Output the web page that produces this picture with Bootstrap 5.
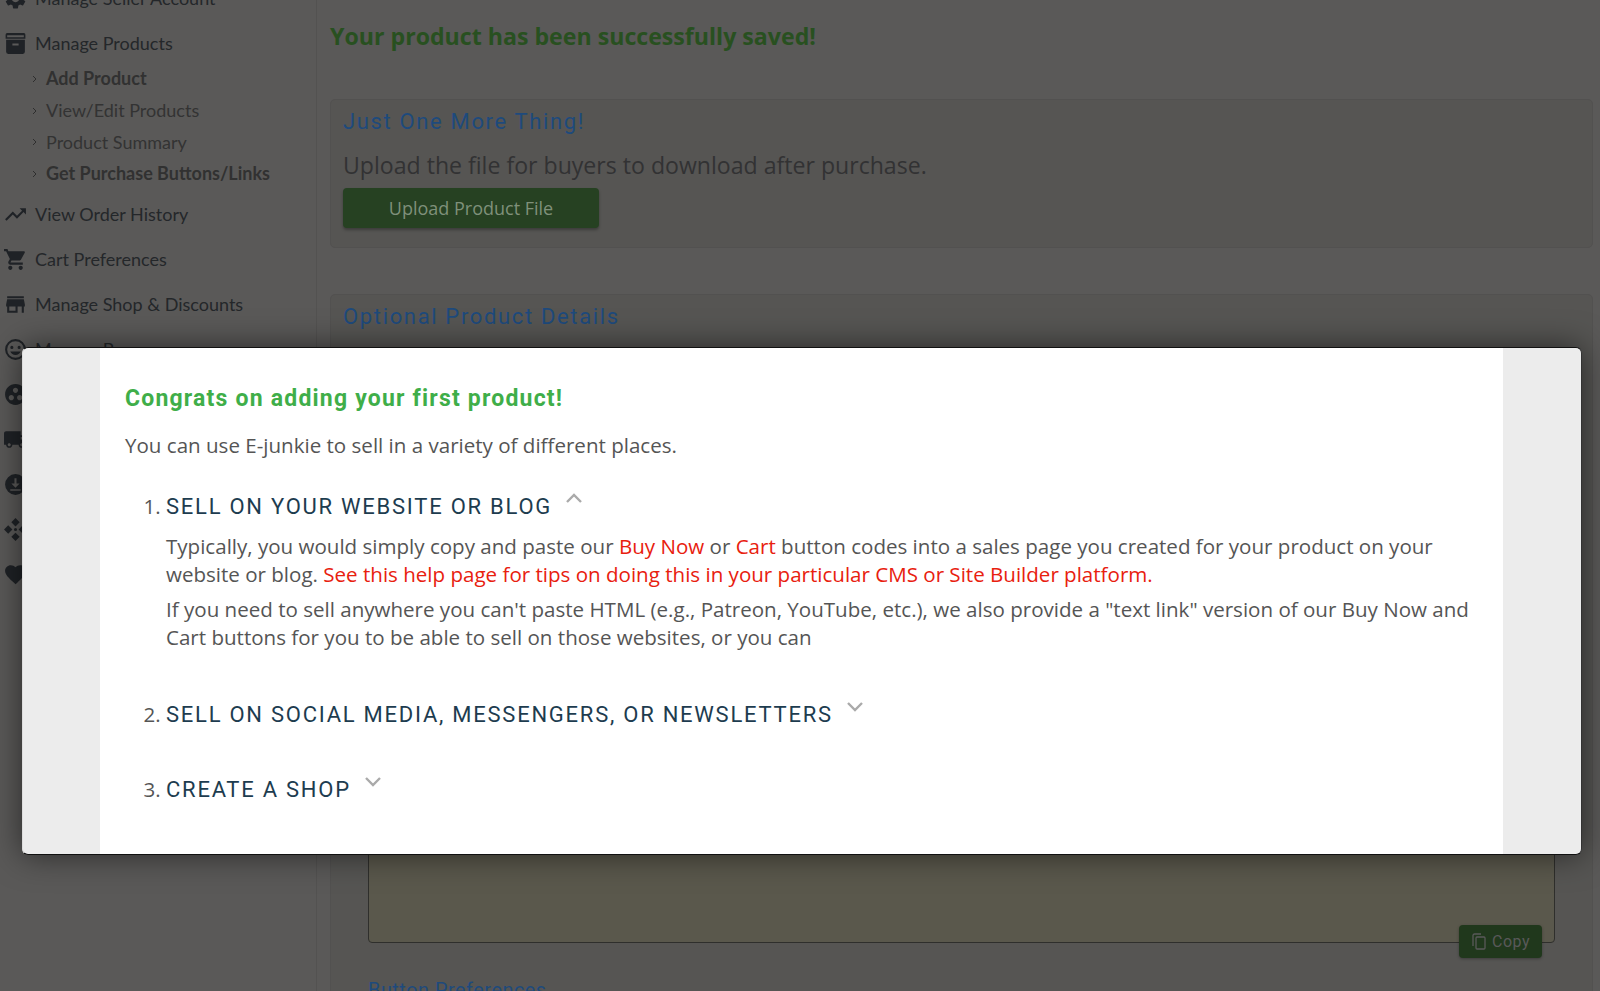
<!DOCTYPE html>
<html lang="en">

<head>
  <meta charset="UTF-8">
  <meta name="viewport" content="width=device-width, initial-scale=1.0">
  <title>Manage Products</title>
  <link href="https://cdn.jsdelivr.net/npm/bootstrap@5.3.0/dist/css/bootstrap.min.css" rel="stylesheet">
  <style>
    body {
      background-color: #5a5958;
      height: 991px;
      overflow: hidden;
      font-family: "Open Sans", sans-serif;
    }

    .page-wrap {
      height: 991px;
      overflow: hidden;
    }

    /* sidebar, the page is scrolled a bit so the first row is cut */
    .side-col {
      width: 317px;
      flex: none;
      border-right: 1px solid #535251;
      margin-top: -24px;
      font-family: Lato, sans-serif;
      font-size: 18px;
      color: #24272a;
    }

    .side-row {
      height: 45px;
      padding-left: 3px;
      gap: 7px;
    }

    .side-row svg {
      width: 25px;
      height: 25px;
      flex: none;
      fill: #1f2226;
    }

    .side-sub {
      list-style: none;
      margin: -3px 0 2px;
      padding: 0 0 0 32px;
      color: #333;
    }

    .side-sub li {
      height: 31.7px;
      gap: 9px;
    }

    .side-sub svg {
      width: 5px;
      height: 8px;
      fill: none;
      stroke: #2e2e2e;
      stroke-width: 1;
    }

    .side-sub .strong-item {
      font-weight: 700;
      color: #313131;
    }

    /* main column */
    .main-col {
      padding: 16px 7px 0 13px;
      min-width: 0;
    }

    .saved-msg {
      font-size: 23.15px;
      font-weight: 700;
      color: #285020;
      margin: 0 0 43px;
      line-height: 40px;
    }

    .dim-card {
      background: #565553;
      border: 1px solid #525150;
      border-radius: 5px;
    }

    .first-card {
      height: 149px;
      padding: 7px 12px;
      margin-bottom: 46px;
    }

    .second-card {
      height: 900px;
      padding: 7px 12px;
    }

    .dim-title {
      font-family: Roboto, sans-serif;
      font-size: 22px;
      font-weight: 400;
      letter-spacing: 1.65px;
      color: #1e4a7c;
      line-height: 30px;
      margin: 0;
    }

    .dim-lead {
      font-size: 23.1px;
      color: #323233;
      line-height: 33px;
      margin: 12px 0 6px;
    }

    .upload-btn {
      width: 256px;
      height: 40px;
      background: #264122;
      border-radius: 4px;
      border: 0;
      color: #7f907a;
      font-size: 18px;
      box-shadow: 0 2px 3px rgba(0, 0, 0, .3);
      padding: 0;
    }

    .code-box {
      height: 359px;
      margin: 252px 25px 0 25px;
      background: #5a584c;
      border: 1px solid #2f2f2c;
      border-radius: 4px;
    }

    .copy-row {
      margin: -18px 38px 0 0;
    }

    .copy-btn {
      width: 83px;
      height: 33px;
      background: #20381c;
      color: #595959;
      border: 0;
      border-radius: 4px;
      font-family: Roboto, sans-serif;
      font-size: 16px;
      letter-spacing: .5px;
      padding: 0;
      gap: 6px;
      box-shadow: 0 1px 3px rgba(0, 0, 0, .3);
    }

    .copy-btn svg {
      width: 15px;
      height: 17px;
      fill: none;
      stroke: #595959;
      stroke-width: 1.3;
    }

    .pref-title {
      font-family: Roboto, sans-serif;
      font-size: 19.9px;
      font-weight: 400;
      letter-spacing: .5px;
      color: #1e4a7c;
      margin: 21px 0 0 25px;
      line-height: 24px;
    }

    /* the popup */
    .modal .welcome-dialog {
      max-width: 1560px;
      width: 1560px;
      margin: 347px 0 0 22px;
    }

    .welcome-content {
      height: 508px;
      background: #ececec;
      border: 1px solid #111;
      border-left-color: #ddd;
      border-right-color: #333;
      border-radius: 6px;
      box-shadow: 0 0 32px rgba(0, 0, 0, .55);
    }

    .welcome-body {
      margin: 0 78px 0 77px;
      height: 100%;
      background: #fff;
      padding: 35px 25px 0;
      color: #555;
      font-size: 20.55px;
      line-height: 28.6px;
    }

    .welcome-title {
      font-family: Roboto, sans-serif;
      font-size: 23px;
      font-weight: 700;
      letter-spacing: 1.2px;
      color: #3fae49;
      line-height: 32px;
      margin: 0 0 16px;
    }

    .welcome-intro {
      margin: 0 0 30px;
    }

    .place-list {
      margin: 0;
      padding: 0 0 0 41px;
    }

    .place-list li {
      margin-bottom: 42px;
    }

    .place-list li:first-child {
      margin-bottom: 46px;
    }

    .place-list li::marker {
      color: #555;
    }

    .place-head {
      font-family: Roboto, sans-serif;
      font-size: 22px;
      letter-spacing: 1.75px;
      color: #1d3c4f;
      line-height: 33px;
      text-transform: uppercase;
    }

    .place-head svg {
      width: 18px;
      height: 11px;
      margin-left: 13px;
      vertical-align: 10px;
      fill: none;
      stroke: #aaa;
      stroke-width: 2.4;
    }

    .place-text {
      margin: 9px 0 6px;
    }

    .place-list a {
      color: #e8200e;
      text-decoration: none;
    }
  </style>
</head>

<body>

  <div class="page-wrap d-flex">
    <div class="side-col">
      <div class="side-row d-flex align-items-center">
        <svg viewBox="0 0 24 24"><path d="M19.14 12.94c.04-.3.06-.61.06-.94 0-.32-.02-.64-.07-.94l2.03-1.58a.49.49 0 0 0 .12-.61l-1.92-3.32a.488.488 0 0 0-.59-.22l-2.39.96c-.5-.38-1.03-.7-1.62-.94l-.36-2.54a.484.484 0 0 0-.48-.41h-3.84c-.24 0-.43.17-.47.41l-.36 2.54c-.59.24-1.13.57-1.62.94l-2.39-.96c-.22-.08-.47 0-.59.22L2.74 8.87c-.12.21-.08.47.12.61l2.03 1.58c-.05.3-.09.63-.09.94s.02.64.07.94l-2.03 1.58a.49.49 0 0 0-.12.61l1.92 3.32c.12.22.37.29.59.22l2.39-.96c.5.38 1.03.7 1.62.94l.36 2.54c.05.24.24.41.48.41h3.84c.24 0 .44-.17.47-.41l.36-2.54c.59-.24 1.13-.56 1.62-.94l2.39.96c.22.08.47 0 .59-.22l1.92-3.32c.12-.22.07-.47-.12-.61l-2.01-1.58zM12 15.6c-1.98 0-3.6-1.62-3.6-3.6s1.62-3.6 3.6-3.6 3.6 1.62 3.6 3.6-1.62 3.6-3.6 3.6z"/></svg>
        <span>Manage Seller Account</span>
      </div>
      <div class="side-row d-flex align-items-center">
        <svg viewBox="0 0 24 24"><path fill-rule="evenodd" d="M2.500 3.500a1.500 1.500 0 0 1 1.500-1.500h16a1.500 1.500 0 0 1 1.500 1.500v4h-19zM4 4v2h16V4zM3 8.500h18V20a2 2 0 0 1-2 2H5a2 2 0 0 1-2-2zM9 12v2h6v-2z"/></svg>
        <span>Manage Products</span>
      </div>
      <ul class="side-sub">
        <li class="d-flex align-items-center strong-item"><svg viewBox="0 0 5 8"><path d="M1 1l3 3-3 3"/></svg>Add Product</li>
        <li class="d-flex align-items-center"><svg viewBox="0 0 5 8"><path d="M1 1l3 3-3 3"/></svg>View/Edit Products</li>
        <li class="d-flex align-items-center"><svg viewBox="0 0 5 8"><path d="M1 1l3 3-3 3"/></svg>Product Summary</li>
        <li class="d-flex align-items-center strong-item"><svg viewBox="0 0 5 8"><path d="M1 1l3 3-3 3"/></svg>Get Purchase Buttons/Links</li>
      </ul>
      <div class="side-row d-flex align-items-center">
        <svg viewBox="0 0 24 24"><path d="M16 6l2.290 2.290-4.880 4.880-4-4L2 16.590 3.410 18l6-6 4 4 6.300-6.290L22 12V6z"/></svg>
        <span>View Order History</span>
      </div>
      <div class="side-row d-flex align-items-center">
        <svg viewBox="0 0 24 24"><path d="M7 18c-1.100 0-1.990.9-1.990 2S5.900 22 7 22s2-.9 2-2-.9-2-2-2zM1 2v2h2l3.600 7.590-1.350 2.450c-.16.28-.25.61-.25.96 0 1.100.9 2 2 2h12v-2H7.420c-.14 0-.25-.11-.25-.25l.03-.12.9-1.630h7.450c.75 0 1.410-.41 1.750-1.030l3.580-6.490c.08-.14.12-.31.12-.48 0-.55-.45-1-1-1H5.210l-.94-2H1zm16 16c-1.100 0-1.990.9-1.990 2s.89 2 1.990 2 2-.9 2-2-.9-2-2-2z"/></svg>
        <span>Cart Preferences</span>
      </div>
      <div class="side-row d-flex align-items-center">
        <svg viewBox="0 0 24 24"><path d="M20 4H4v2h16V4zm1 10v-2l-1-5H4l-1 5v2h1v6h10v-6h4v6h2v-6h1zm-9 4H6v-4h6v4z"/></svg>
        <span>Manage Shop &amp; Discounts</span>
      </div>
      <div class="side-row d-flex align-items-center">
        <svg viewBox="0 0 24 24"><path fill-rule="evenodd" d="M12 2a10 10 0 1 0 0 20 10 10 0 0 0 0-20zm0 2a8 8 0 1 1 0 16 8 8 0 0 1 0-16zM8.500 8.500a1.500 1.500 0 1 0 0 3 1.500 1.500 0 0 0 0-3zm7 0a1.500 1.500 0 1 0 0 3 1.500 1.500 0 0 0 0-3zM7 14a5.500 5.500 0 0 0 10 0z"/></svg>
        <span>Manage Buyers</span>
      </div>
      <div class="side-row d-flex align-items-center">
        <svg viewBox="0 0 24 24"><path d="M12 2C6.480 2 2 6.480 2 12s4.480 10 10 10 10-4.480 10-10S17.520 2 12 2zM8 17.500c-1.380 0-2.500-1.120-2.500-2.500s1.120-2.500 2.500-2.500 2.500 1.120 2.500 2.500-1.120 2.500-2.500 2.500zM9.500 8c0-1.380 1.120-2.500 2.500-2.500s2.500 1.120 2.500 2.500-1.120 2.500-2.500 2.500S9.500 9.380 9.500 8zm6.500 9.500c-1.380 0-2.500-1.120-2.500-2.500s1.120-2.500 2.500-2.500 2.500 1.120 2.500 2.500-1.120 2.500-2.500 2.500z"/></svg>
      </div>
      <div class="side-row d-flex align-items-center">
        <svg viewBox="0 0 24 24"><path d="M20 8h-3V4H3c-1.100 0-2 .9-2 2v11h2c0 1.660 1.340 3 3 3s3-1.340 3-3h6c0 1.660 1.340 3 3 3s3-1.340 3-3h2v-5l-3-4zM6 18.500c-.83 0-1.500-.67-1.500-1.500s.67-1.500 1.500-1.500 1.500.67 1.500 1.500-.67 1.500-1.500 1.500zm13.500-9l1.960 2.500H17V9.500h2.500zm-1.500 9c-.83 0-1.500-.67-1.500-1.500s.67-1.500 1.500-1.500 1.500.67 1.500 1.500-.67 1.500-1.500 1.500z"/></svg>
      </div>
      <div class="side-row d-flex align-items-center">
        <svg viewBox="0 0 24 24"><path fill-rule="evenodd" d="M12 2a10 10 0 1 0 0 20 10 10 0 0 0 0-20zM11 6h2v5h3l-4 4-4-4h3zM7 16.500h10V18H7z"/></svg>
      </div>
      <div class="side-row d-flex align-items-center">
        <svg viewBox="0 0 24 24"><path fill-rule="evenodd" d="M12 1l4 4-4 4-4-4zM5 8l4 4-4 4-4-4zM19 8l4 4-4 4-4-4zM12 15l4 4-4 4-4-4zM12 10.500a1.500 1.500 0 1 0 0 3 1.500 1.500 0 0 0 0-3z"/></svg>
      </div>
      <div class="side-row d-flex align-items-center">
        <svg viewBox="0 0 24 24"><path d="M12 21.350l-1.450-1.320C5.400 15.360 2 12.280 2 8.500 2 5.420 4.420 3 7.500 3c1.740 0 3.410.81 4.500 2.090C13.090 3.810 14.760 3 16.500 3 19.580 3 22 5.420 22 8.500c0 3.780-3.400 6.860-8.550 11.540L12 21.350z"/></svg>
      </div>
    </div>

    <div class="main-col flex-grow-1">
      <h1 class="saved-msg">Your product has been successfully saved!</h1>
      <div class="dim-card first-card">
        <h2 class="dim-title">Just One More Thing!</h2>
        <p class="dim-lead">Upload the file for buyers to download after purchase.</p>
        <button type="button" class="btn upload-btn">Upload Product File</button>
      </div>
      <div class="dim-card second-card">
        <h2 class="dim-title">Optional Product Details</h2>
        <div class="code-box"></div>
        <div class="copy-row d-flex justify-content-end">
          <button type="button" class="btn copy-btn d-flex align-items-center justify-content-center">
            <svg viewBox="0 0 15 17"><path d="M2 13V2.500A1.500 1.500 0 0 1 3.500 1H10"/><rect x="5" y="4" width="9" height="12" rx="1"/></svg>Copy
          </button>
        </div>
        <h3 class="pref-title">Button Preferences</h3>
      </div>
    </div>
  </div>

  <div class="modal d-block" tabindex="-1">
    <div class="modal-dialog welcome-dialog">
      <div class="modal-content welcome-content">
        <div class="welcome-body">
          <h2 class="welcome-title">Congrats on adding your first product!</h2>
          <p class="welcome-intro">You can use E-junkie to sell in a variety of different places.</p>
          <ol class="place-list">
            <li>
              <div class="place-head">Sell on your website or blog<svg viewBox="0 0 18 11"><path d="M2 9l7-7 7 7"/></svg></div>
              <p class="place-text">Typically, you would simply copy and paste our <a href="#">Buy Now</a> or <a href="#">Cart</a> button codes into a sales page you created for your product on your website or blog. <a href="#">See this help page for tips on doing this in your particular CMS or Site Builder platform.</a></p>
              <p class="mb-0">If you need to sell anywhere you can't paste HTML (e.g., Patreon, YouTube, etc.), we also provide a "text link" version of our Buy Now and Cart buttons for you to be able to sell on those websites, or you can</p>
            </li>
            <li>
              <div class="place-head">Sell on social media, messengers, or newsletters<svg viewBox="0 0 18 11"><path d="M2 2l7 7 7-7"/></svg></div>
            </li>
            <li>
              <div class="place-head">Create a shop<svg viewBox="0 0 18 11"><path d="M2 2l7 7 7-7"/></svg></div>
            </li>
          </ol>
        </div>
      </div>
    </div>
  </div>

  <script src="https://cdn.jsdelivr.net/npm/bootstrap@5.3.0/dist/js/bootstrap.bundle.min.js"></script>
</body>

</html>
